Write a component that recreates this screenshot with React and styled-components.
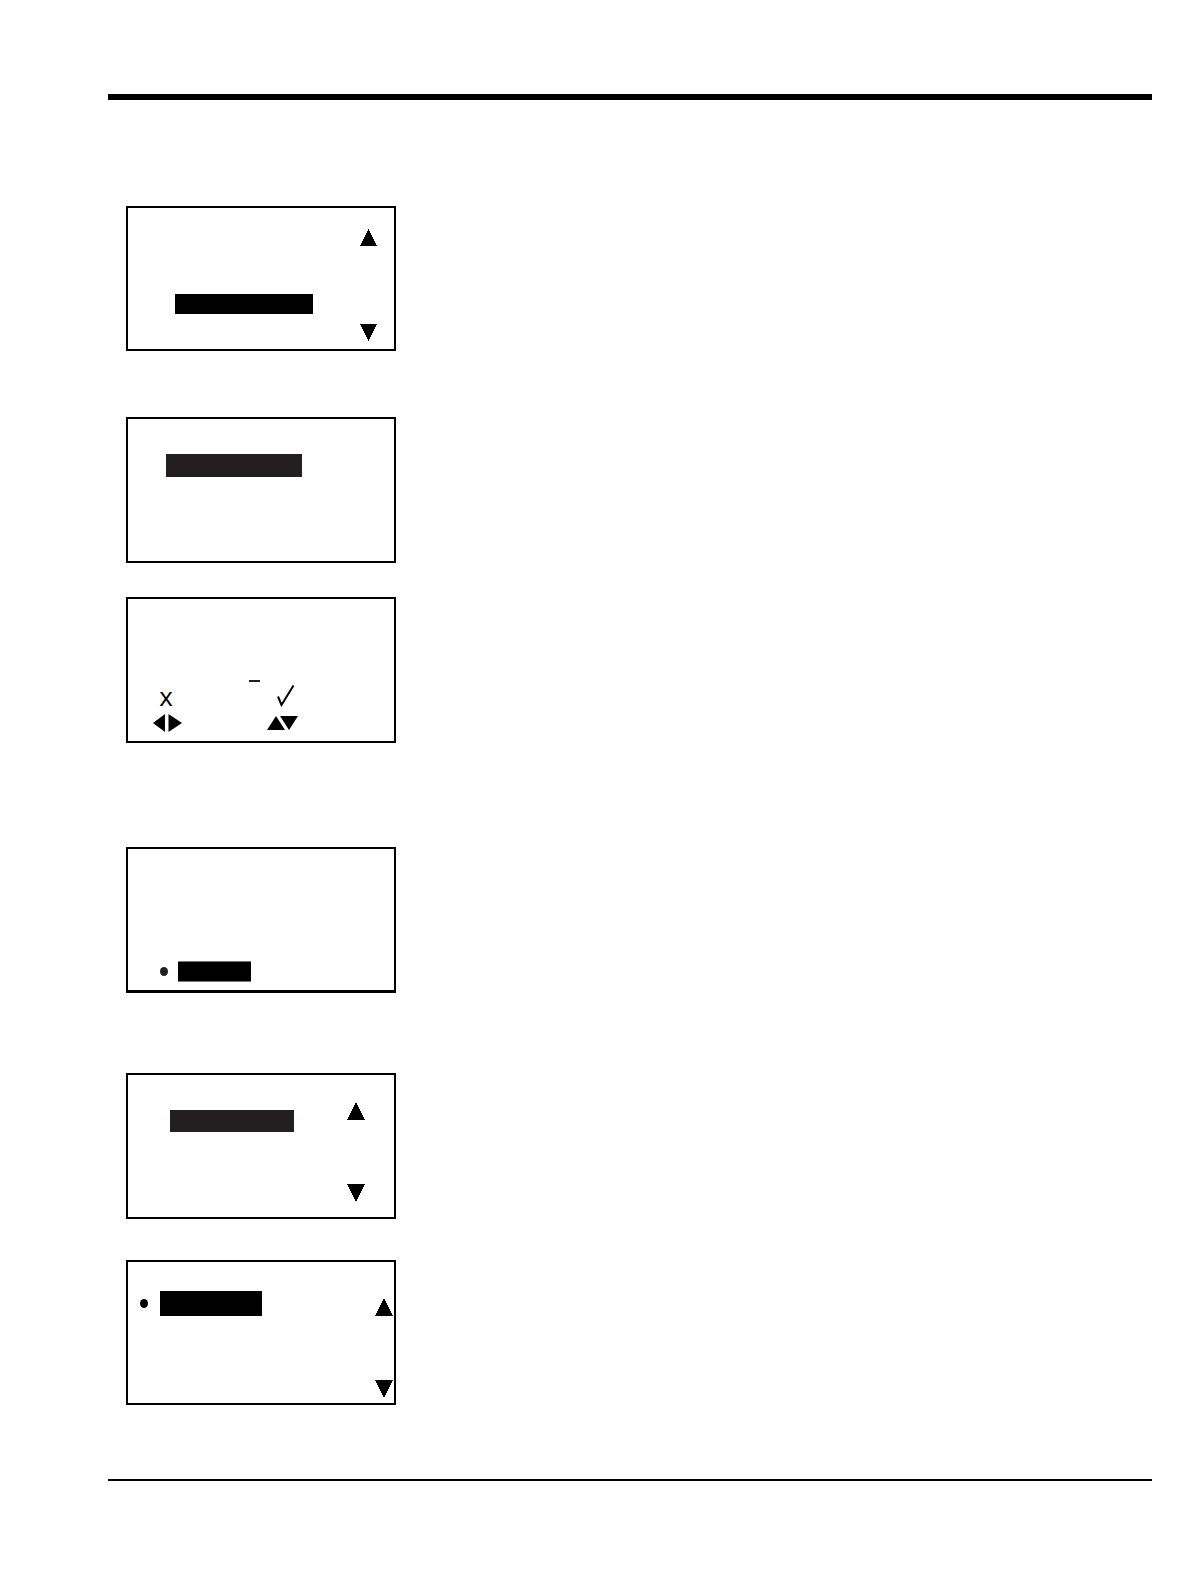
import React from "react";
import styled, { createGlobalStyle } from "styled-components";

const GlobalStyle = createGlobalStyle`
  *, *::before, *::after { box-sizing: border-box; }
  body {
    margin: 0;
    background: #fff;
    color: #000;
    font-family: "Open Sans", "Noto Sans", sans-serif;
  }
  svg { display: block; }
`;

const Page = styled.div`
  padding: 94px 39px 103px 108px;
`;

const HeaderRule = styled.header`
  height: 6px;
  background: #000;
`;

const FooterRule = styled.footer`
  height: 2px;
  background: #000;
`;

const Content = styled.main`
  padding: 106px 18px 74px;
`;

const Screen = styled.section`
  display: flex;
  justify-content: space-between;
  width: 270px;
  max-width: 100%;
  height: ${(p) => p.$height || 146}px;
  margin-top: ${(p) => p.$gap || 0}px;
  border: 2px solid #000;
  border-bottom-width: ${(p) => p.$base || 2}px;
`;

const Item = styled.div`
  display: flex;
  align-items: center;
  align-self: flex-start;
  gap: ${(p) => p.$gap || 10}px;
  padding: ${(p) => p.$top}px 0 0 ${(p) => p.$left}px;
`;

const Highlight = styled.div`
  width: ${(p) => p.$width}px;
  height: ${(p) => p.$height}px;
  background: ${(p) => (p.$soft ? "#231f20" : "#000")};
  border: 0 solid #777;
  border-width: ${(p) => (p.$edged ? "1px 0" : "0")};
`;

const Bullet = styled.span`
  width: 8px;
  height: 9px;
  border-radius: 50%;
  background: ${(p) => (p.$soft ? "#231f20" : "#000")};
`;

const Scroll = styled.div`
  display: flex;
  flex-direction: column;
  justify-content: space-between;
  padding: ${(p) => p.$top}px ${(p) => p.$right}px ${(p) => p.$bottom}px 0;
`;

const Entry = styled.div`
  padding: 81px 0 0 25px;
`;

const Cursor = styled.div`
  width: 11px;
  height: 2px;
  margin: 0 0 3px 96px;
  background: #231f20;
`;

const Keys = styled.div`
  display: grid;
  grid-template-columns: 28px 30px;
  grid-template-rows: 22px 18px;
  gap: 7px 86px;
  align-items: center;
`;

const CancelKey = styled.span`
  padding-right: 2px;
  font-size: 26px;
  line-height: 22px;
  text-align: center;
`;

const Arrow = ({ down, size = 18 }) => (
  <svg width={size} height={size} viewBox="0 0 18 18" shapeRendering="crispEdges" aria-hidden="true">
    <path d={down ? "M0 0H18L9 18Z" : "M0 18H18L9 0Z"} />
  </svg>
);

const Arrows = ({ size, ...place }) => (
  <Scroll {...place}>
    <Arrow size={size} />
    <Arrow size={size} down />
  </Scroll>
);

const CheckIcon = () => (
  <svg width="30" height="22" viewBox="0 0 30 22" aria-hidden="true">
    <path d="M11 11.5L14.5 20L26.5 0.5" fill="none" stroke="#000" strokeWidth="2" />
  </svg>
);

const LeftRightIcon = () => (
  <svg width="29" height="18" viewBox="0 0 29 18" aria-hidden="true">
    <path d="M12 0V18L0 9ZM15.5 0V18L29 9Z" />
  </svg>
);

const UpDownIcon = () => (
  <svg width="31" height="14" viewBox="0 0 31 14" aria-hidden="true">
    <path d="M0 14L9 0L18 14ZM13 0H31L22 14Z" />
  </svg>
);

export default function App() {
  return (
    <>
      <GlobalStyle />
      <Page>
        <HeaderRule />
        <Content>
          <Screen $height={145}>
            <Item $top={86} $left={47}>
              <Highlight $width={138} $height={20} />
            </Item>
            <Arrows $top={21} $right={17} $bottom={8} size={17} />
          </Screen>

          <Screen $gap={66}>
            <Item $top={35} $left={38}>
              <Highlight $width={136} $height={23} $soft />
            </Item>
          </Screen>

          <Screen $gap={34}>
            <Entry>
              <Cursor />
              <Keys>
                <CancelKey>x</CancelKey>
                <CheckIcon />
                <LeftRightIcon />
                <UpDownIcon />
              </Keys>
            </Entry>
          </Screen>

          <Screen $gap={104} $base={3}>
            <Item $top={112} $left={32}>
              <Bullet $soft />
              <Highlight $width={73} $height={21} $edged />
            </Item>
          </Screen>

          <Screen $gap={80}>
            <Item $top={35} $left={42}>
              <Highlight $width={124} $height={22} $soft />
            </Item>
            <Arrows $top={27} $right={29} $bottom={15} />
          </Screen>

          <Screen $gap={41} $height={145}>
            <Item $top={29} $left={12} $gap={12}>
              <Bullet />
              <Highlight $width={102} $height={25} />
            </Item>
            <Arrows $top={36} $right={1} $bottom={5} />
          </Screen>
        </Content>
        <FooterRule />
      </Page>
    </>
  );
}
